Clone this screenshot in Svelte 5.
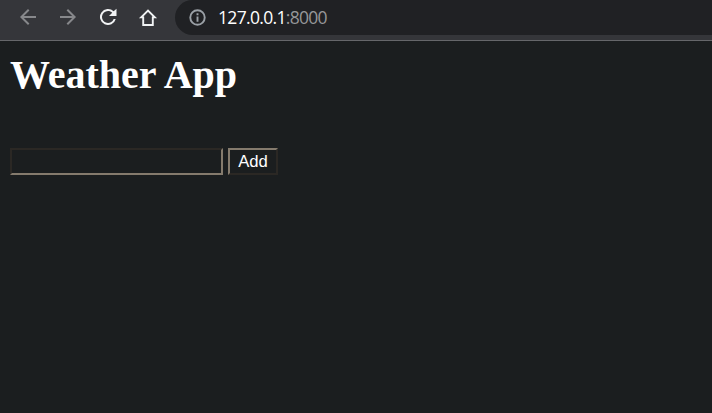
<script>
  let city = $state('');
</script>

<div class="window">
  <header>
    <nav>
      <button class="icon dim" aria-label="Back">
        <svg viewBox="0 0 24 24"><path d="M20 11H7.83l5.59-5.59L12 4l-8 8 8 8 1.41-1.41L7.83 13H20z" /></svg>
      </button>
      <button class="icon dim" aria-label="Forward">
        <svg viewBox="0 0 24 24"><path d="M12 4l-1.41 1.41L16.17 11H4v2h12.17l-5.58 5.59L12 20l8-8z" /></svg>
      </button>
      <button class="icon" aria-label="Reload">
        <svg viewBox="0 0 24 24"><path d="M17.65 6.35A8 8 0 1 0 19.73 14h-2.08A6 6 0 1 1 12 6c1.66 0 3.14.69 4.22 1.78L13 11h7.5V3.8z" /></svg>
      </button>
      <button class="icon" aria-label="Home">
        <svg viewBox="0 0 24 24"><path class="line" d="M5.2 12.4H7.2V20h9.6v-7.6h2L12 5.6z" /></svg>
      </button>
    </nav>
    <div class="address">
      <svg viewBox="0 0 16 16">
        <circle cx="8" cy="8" r="6.8" />
        <path d="M7.1 7h1.8v5H7.1zM7.1 4h1.8v1.8H7.1z" />
      </svg>
      <span class="url">127.0.0.1<span class="port">:8000</span></span>
    </div>
  </header>
  <main>
    <h1>Weather App</h1>
    <form onsubmit={(e) => e.preventDefault()}>
      <input type="text" aria-label="City" bind:value={city} />
      <button class="add" type="submit">Add</button>
    </form>
  </main>
</div>

<style>
  :global(body) {
    margin: 0;
    background: #1b1e1f;
  }
  .window {
    height: 413px;
    overflow: hidden;
    background: #1b1e1f;
  }
  header {
    display: flex;
    box-sizing: border-box;
    height: 41px;
    background: #35363a;
    border-bottom: 1px solid #66676a;
  }
  nav {
    display: flex;
    box-sizing: border-box;
    gap: 16px;
    flex: none;
    width: 175px;
    padding: 4.7px 0 0 15.5px;
  }
  .icon {
    width: 24px;
    height: 24px;
    padding: 0;
    border: 0;
    background: none;
    color: #f1f3f4;
  }
  .icon svg {
    display: block;
    width: 24px;
    height: 24px;
    fill: currentColor;
  }
  .icon .line {
    fill: none;
    stroke: currentColor;
    stroke-width: 1.9;
  }
  .dim {
    color: #87888b;
  }
  .address {
    display: flex;
    flex: 1;
    align-items: center;
    box-sizing: border-box;
    height: 35px;
    padding-left: 14px;
    border-radius: 18px 0 0 18px;
    background: #202124;
  }
  .address svg {
    width: 17px;
    height: 17px;
    margin-right: 12px;
    fill: #9aa0a6;
  }
  .address circle {
    fill: none;
    stroke: #9aa0a6;
    stroke-width: 1.8;
  }
  .url {
    margin-top: -1px;
    font: 17.5px/24px 'Open Sans', 'Noto Sans', sans-serif;
    letter-spacing: -0.68px;
    color: #fff;
  }
  .port {
    color: #969799;
  }
  main {
    padding: 11px 10px 0;
  }
  h1 {
    margin: 0;
    font: bold 40px/46px 'Liberation Serif', serif;
    color: #fff;
  }
  form {
    display: flex;
    gap: 5px;
    margin-top: 50px;
  }
  input {
    box-sizing: border-box;
    width: 213px;
    height: 27px;
    margin: 0;
    padding: 1px 2px;
    border: 2px solid;
    border-color: #2b2824 #857b6d #857b6d #2b2824;
    border-radius: 0;
    outline: none;
    background: #1b1e1f;
    color: #fff;
    font: 16.67px 'Liberation Sans', sans-serif;
  }
  .add {
    box-sizing: border-box;
    width: 50px;
    height: 27px;
    margin: 0;
    padding: 0;
    border: 2px solid;
    border-color: #857b6d #2b2824 #2b2824 #857b6d;
    border-radius: 0;
    background: #1b1e1f;
    color: #fff;
    font: 16.67px/23px 'Liberation Sans', sans-serif;
  }
</style>
